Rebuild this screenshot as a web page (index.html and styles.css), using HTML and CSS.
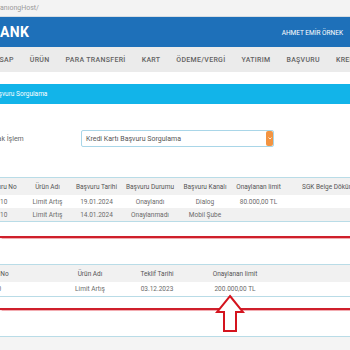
FILE: index.html
```html
<!DOCTYPE html>
<html lang="tr">
<head>
    <meta charset="UTF-8">
    <title>Başvuru Sorgulama</title>
    <link rel="stylesheet" href="styles.css">
</head>
<body>
    <div class="url-bar">anıongHost/</div>

    <div class="top-bar">
        <div class="logo">ANK</div>
        <div class="user-name">AHMET EMİR ÖRNEK</div>
    </div>

    <div class="nav-bar">
        <span class="nav-item first">HESAP</span>
        <span class="nav-item">ÜRÜN</span>
        <span class="nav-item">PARA TRANSFERİ</span>
        <span class="nav-item">KART</span>
        <span class="nav-item">ÖDEME/VERGİ</span>
        <span class="nav-item">YATIRIM</span>
        <span class="nav-item">BAŞVURU</span>
        <span class="nav-item">KREDİ</span>
    </div>

    <div class="page">
        <div class="title-bar">Başvuru Sorgulama</div>

        <div class="form-row">
            <label class="form-label">Yapılacak İşlem</label>
            <div class="select-box">
                <span>Kredi Kartı Başvuru Sorgulama</span>
                <span class="select-btn">
                    <svg width="4" height="3" viewBox="0 0 4 3"><path d="M0.5 0.5 L2 2 L3.5 0.5" fill="none" stroke="#fff" stroke-width="0.8"/></svg>
                </span>
            </div>
        </div>

        <table class="grid grid-one">
            <colgroup>
                <col style="width:48px"><col style="width:47px"><col style="width:51px"><col style="width:56px"><col style="width:54px"><col style="width:53px"><col style="width:90px">
            </colgroup>
            <thead>
                <tr><th>Başvuru No</th><th>Ürün Adı</th><th>Başvuru Tarihi</th><th>Başvuru Durumu</th><th>Başvuru Kanalı</th><th>Onaylanan limit</th><th>SGK Belge Dökümü</th></tr>
            </thead>
            <tbody>
                <tr><td>4810</td><td>Limit Artış</td><td>19.01.2024</td><td>Onaylandı</td><td>Dialog</td><td>80.000,00 TL</td><td></td></tr>
                <tr><td>4710</td><td>Limit Artış</td><td>14.01.2024</td><td>Onaylanmadı</td><td>Mobil Şube</td><td></td><td></td></tr>
            </tbody>
        </table>

        <div class="red-line"></div>

        <table class="grid grid-two">
            <colgroup>
                <col style="width:128px"><col style="width:68px"><col style="width:66px"><col style="width:90px"><col style="width:70px">
            </colgroup>
            <thead>
                <tr><th>Başvuru No</th><th>Ürün Adı</th><th>Teklif Tarihi</th><th>Onaylanan limit</th><th></th></tr>
            </thead>
            <tbody>
                <tr><td>46950</td><td>Limit Artış</td><td>03.12.2023</td><td>200.000,00 TL</td><td></td></tr>
            </tbody>
        </table>

        <div class="red-line second"></div>

        <div class="next-table"></div>

        <!-- annotation arrow -->
        <svg class="arrow" width="30" height="39" viewBox="0 0 30 39">
            <path d="M15 2 L28 18 L21 18 L21 37 L9 37 L9 18 L2 18 Z" fill="#fff" stroke="#d4141e" stroke-width="2" stroke-linejoin="miter"/>
        </svg>
    </div>
</body>
</html>
```

FILE: styles.css
```css
body {
    margin: 0;
    width: 350px;
    height: 350px;
    overflow: hidden;
    background: #fff;
    font-family: Roboto, "Liberation Sans", sans-serif;
    position: relative;
}
.url-bar {
    height: 16px;
    line-height: 16px;
    background: #f3f3f3;
    border-bottom: 1px solid #d6dde3;
    color: #9a9a9a;
    font-size: 7px;
}
.top-bar {
    height: 30px;
    background: #1e70b9;
    display: flex;
    align-items: center;
    justify-content: space-between;
    padding-right: 7px;
}
.logo {
    color: #fff;
    font-weight: bold;
    font-size: 14px;
    letter-spacing: 0.3px;
}
.user-name {
    color: #fff;
    font-size: 6.5px;
    margin-top: 2px;
}
.nav-bar {
    height: 25px;
    background: #ebebeb;
    display: flex;
    align-items: center;
    gap: 16px;
    white-space: nowrap;
}
.nav-item {
    color: #636363;
    font-size: 7px;
    font-weight: 500;
    letter-spacing: 0.3px;
}
.nav-item.first {
    margin-left: -10px;
}
.page {
    padding-top: 12px;
    background: #fff;
}
.title-bar {
    height: 20px;
    line-height: 20px;
    background: #12b4e9;
    color: #fff;
    font-size: 6.5px;
    text-indent: -9px;
    overflow: hidden;
}
.form-row {
    display: flex;
    align-items: center;
    margin-top: 26px;
    margin-left: -25px;
}
.form-label {
    width: 106px;
    color: #666;
    font-size: 7px;
}
.select-box {
    width: 187px;
    height: 15px;
    border: 1px solid #a9d6e8;
    border-radius: 2px;
    display: flex;
    align-items: center;
    justify-content: space-between;
    padding-left: 4px;
    color: #555;
    font-size: 7px;
}
.select-btn {
    width: 7px;
    height: 15px;
    background: #f39441;
    border-radius: 2px;
    display: flex;
    align-items: center;
    justify-content: center;
}
.grid {
    border-collapse: collapse;
    table-layout: fixed;
    border-top: 1px solid #b9dce7;
    border-bottom: 1px solid #b9dce7;
    font-size: 6.5px;
    color: #6a6a6a;
    white-space: nowrap;
}
.grid th {
    height: 17px;
    padding: 0;
    background: #f1f1f1;
    font-weight: normal;
    color: #555;
    text-align: center;
    overflow: hidden;
}
.grid td {
    height: 13px;
    padding: 0;
    text-align: center;
    overflow: hidden;
}
.grid tbody tr:nth-child(2) td {
    background: #f1f1f1;
}
.grid-one {
    margin-top: 30px;
    margin-left: -24px;
    width: 399px;
}
.grid-two {
    margin-top: 26px;
    margin-left: -72px;
    width: 422px;
}
.grid-two td {
    height: 14px;
}
.red-line {
    height: 2px;
    margin-top: 14px;
    background: #cf1f2b;
    box-shadow: 0 0 1px 0.5px rgba(230, 90, 100, 0.5);
}
.red-line.second {
    margin-top: 11px;
}
.next-table {
    margin-top: 26px;
    border-top: 1px solid #b9dce7;
    height: 20px;
    background: #f4f4f4;
}
.arrow {
    position: absolute;
    left: 215px;
    top: 294px;
}
```
